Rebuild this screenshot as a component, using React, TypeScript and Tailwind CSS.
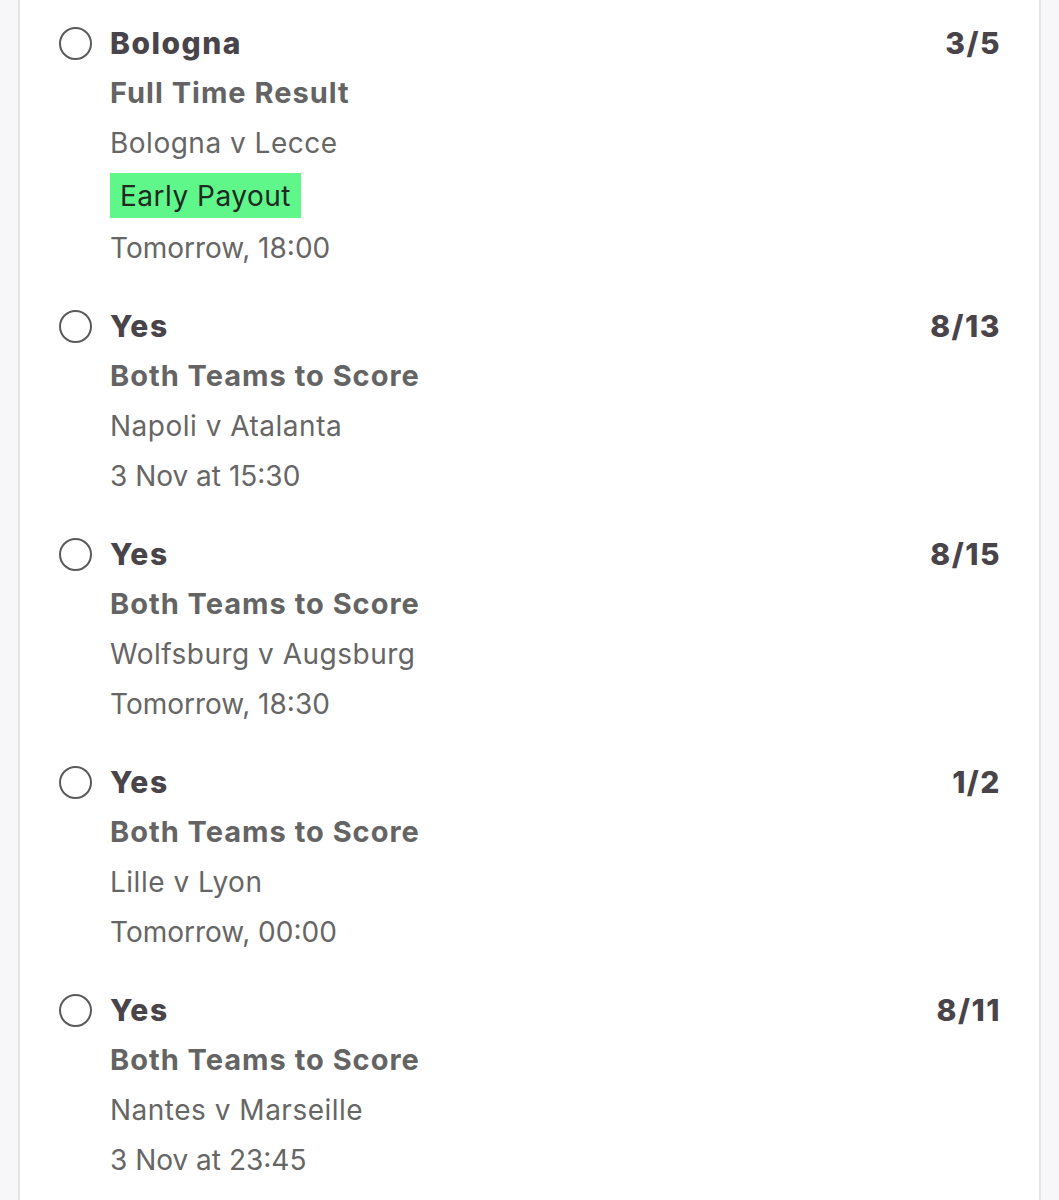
const selections = [
  { pick: "Bologna", odds: "3/5", market: "Full Time Result", match: "Bologna v Lecce", time: "Tomorrow, 18:00", early: true },
  { pick: "Yes", odds: "8/13", market: "Both Teams to Score", match: "Napoli v Atalanta", time: "3 Nov at 15:30" },
  { pick: "Yes", odds: "8/15", market: "Both Teams to Score", match: "Wolfsburg v Augsburg", time: "Tomorrow, 18:30" },
  { pick: "Yes", odds: "1/2", market: "Both Teams to Score", match: "Lille v Lyon", time: "Tomorrow, 00:00" },
  { pick: "Yes", odds: "8/11", market: "Both Teams to Score", match: "Nantes v Marseille", time: "3 Nov at 23:45" },
];

export default function App() {
  return (
    <div className="flex h-[1200px] w-[1059px] overflow-hidden bg-[#f7f7f9] font-['Inter',sans-serif]">
      <div className="ml-[18px] mr-[18px] flex flex-1 flex-col gap-[28px] border-x-[2px] border-[#e4e4e6] bg-white pl-[39px] pr-[40px] pt-[18px]">
        {selections.map((s, i) => (
          <div key={i} className="flex">
            <div className="flex h-[50px] w-[51px] shrink-0 items-center">
              <div className="h-[33px] w-[33px] rounded-full border-[2.5px] border-[#5a5a5a]" />
            </div>
            <div className="flex flex-1 flex-col">
              <div className="flex h-[50px] items-center justify-between">
                <span className="text-[30px] font-extrabold tracking-[1.5px] text-[#49434a]">{s.pick}</span>
                <span className="-mr-[2px] text-[30px] font-extrabold tracking-[1.5px] text-[#49434a]">{s.odds}</span>
              </div>
              <div className="flex h-[50px] items-center text-[29px] font-bold tracking-[1px] text-[#646464]">{s.market}</div>
              <div className="flex h-[50px] items-center text-[28px] tracking-[0.5px] text-[#666666]">{s.match}</div>
              {s.early && (
                <div className="flex h-[55px] items-center">
                  <span className="flex h-[45px] items-center bg-[#60f78a] px-[10px] text-[28px] tracking-[0.5px] text-[#1e2a22]">Early Payout</span>
                </div>
              )}
              <div className="flex h-[50px] items-center text-[28px] text-[#666666]">{s.time}</div>
            </div>
          </div>
        ))}
      </div>
    </div>
  );
}
